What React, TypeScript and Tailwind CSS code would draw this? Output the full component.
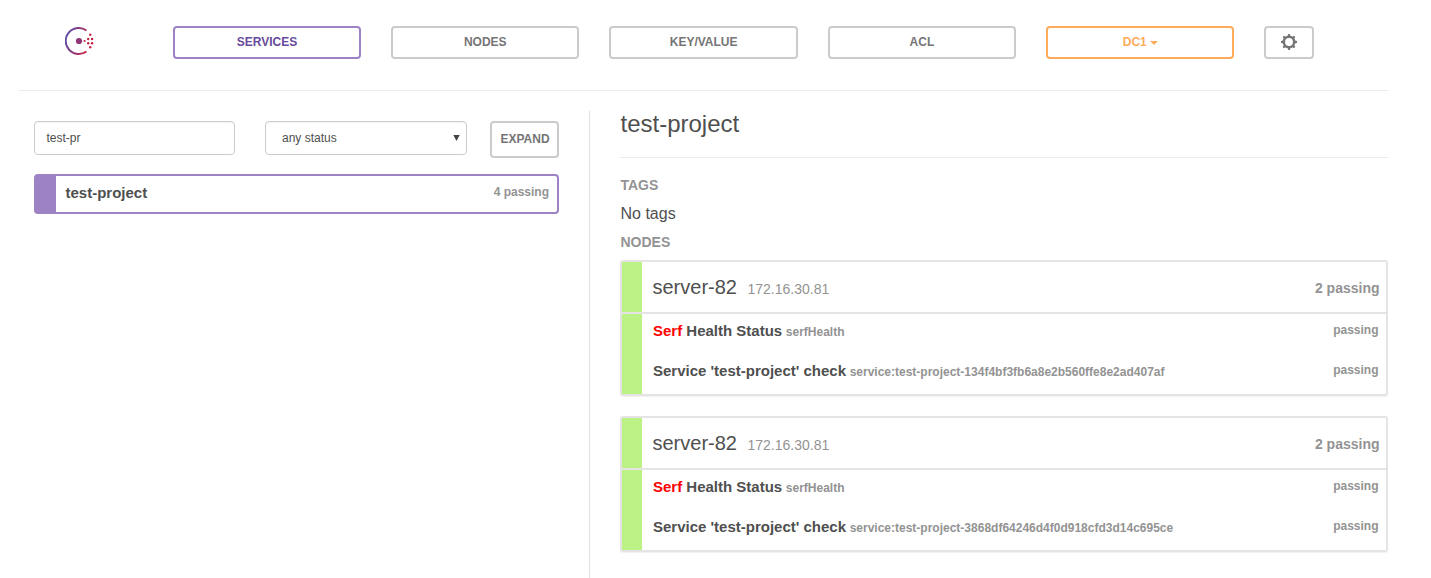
import React from "react";

const navItems = ["SERVICES", "NODES", "KEY/VALUE", "ACL"];

const nodes = [
  { name: "server-82", ip: "172.16.30.81", check: "service:test-project-134f4bf3fb6a8e2b560ffe8e2ad407af" },
  { name: "server-82", ip: "172.16.30.81", check: "service:test-project-3868df64246d4f0d918cfd3d14c695ce" },
];

function Logo() {
  return (
    <svg width="30" height="30" viewBox="0 0 30 30" className="block shrink-0">
      <defs>
        <linearGradient id="ring" x1="0" y1="0.3" x2="1" y2="0.7">
          <stop offset="0" stopColor="#5c4ea5" />
          <stop offset="0.5" stopColor="#8a3a80" />
          <stop offset="1" stopColor="#c62a48" />
        </linearGradient>
      </defs>
      <path d="M21.5 4.6A13 13 0 1 0 21.5 25.4" fill="none" stroke="url(#ring)" strokeWidth="1.9" />
      <circle cx="14" cy="15" r="3.1" fill="#8f3878" />
      <circle cx="19.6" cy="15" r="1.1" fill="#b03060" />
      <g fill="#c8203f">
        <circle cx="23.2" cy="13" r="1.2" />
        <circle cx="23.2" cy="17.2" r="1.2" />
        <circle cx="27.1" cy="13" r="1.2" />
        <circle cx="27.1" cy="17.2" r="1.2" />
        <circle cx="25.2" cy="8.8" r="1.2" />
        <circle cx="25.2" cy="21.3" r="1.2" />
      </g>
    </svg>
  );
}

function Gear() {
  return (
    <svg width="16" height="16" viewBox="0 0 16 16" className="block">
      <circle cx="8" cy="8" r="5.2" fill="none" stroke="#757575" strokeWidth="2.5" />
      <g fill="#757575">
        {[0, 45, 90, 135, 180, 225, 270, 315].map((a) => (
          <path key={a} d="M6.5 2.8L7.1 0H8.9L9.5 2.8Z" transform={`rotate(${a} 8 8)`} />
        ))}
      </g>
    </svg>
  );
}

function CheckRow({ title, id }: { title: React.ReactNode; id: string }) {
  return (
    <div className="flex h-10 justify-between pl-[11px] pr-[7.5px]">
      <div className="pt-[7px] leading-5 whitespace-nowrap">
        <span className="text-[15px] font-bold text-[#4f4f4f]">{title}</span>
        <span className="ml-[3.6px] text-[12px] font-bold text-[#939393]">{id}</span>
      </div>
      <div className="pt-[6px] text-[12px] leading-5 font-bold text-[#939393]">passing</div>
    </div>
  );
}

export default function App() {
  return (
    <div className="h-[578px] w-[1431px] overflow-hidden bg-white font-['Liberation_Sans',Arial,sans-serif] text-[#4f4f4f]">
      <div className="ml-[19px] w-[1369px]">
        <header className="flex h-[91px] items-start border-b border-[#ebebeb] pt-[26px] pl-[46px]">
          <Logo />
          <nav className="ml-[77.8px] flex gap-[30px]">
            {navItems.map((item, i) => (
              <button
                key={item}
                className={
                  "h-[33px] w-[188.33px] rounded-[4px] border-2 text-[12px] leading-[27px] font-bold " +
                  (i === 0 ? "border-[#9d83c5] text-[#694a9c]" : "border-[#cbcbcb] text-[#757575]")
                }
              >
                {item}
              </button>
            ))}
            <button className="flex h-[33px] w-[188.33px] items-center justify-center gap-[3px] rounded-[4px] border-2 border-[#feac5b] pb-[2px] text-[12px] font-bold text-[#feac5b]">
              DC1
              <svg width="8" height="4" viewBox="0 0 8 4" className="mt-[3px]">
                <path d="M0 0H8L4 4Z" fill="currentColor" />
              </svg>
            </button>
            <button className="flex h-[33px] w-[50px] items-center justify-center rounded-[4px] border-2 border-[#cbcbcb] pb-[1px]">
              <Gear />
            </button>
          </nav>
        </header>

        <main className="flex pt-5">
          <section className="w-[570px] shrink-0 pt-[10px] pl-[15px]">
            <div className="flex items-start">
              <div className="h-[34px] w-[201px] rounded-[4px] border border-[#cccccc] pl-[11.5px] text-[12px] leading-[32px] shadow-[inset_0_1px_1px_rgba(0,0,0,0.05)]">
                test-pr
              </div>
              <div className="ml-[30px] flex h-[34px] w-[202px] items-center justify-between rounded-[4px] border border-[#cccccc] pr-[6px] pl-[16px] text-[12px] shadow-[inset_0_1px_1px_rgba(0,0,0,0.05)]">
                any status
                <svg width="7" height="6" viewBox="0 0 7 6">
                  <path d="M0.3 0H6.7L3.5 6Z" fill="#444" />
                </svg>
              </div>
              <button className="ml-[23px] h-[37px] w-[69px] rounded-[4px] border-2 border-[#cbcbcb] pb-[2px] pl-[1px] text-[12px] font-bold text-[#757575]">
                EXPAND
              </button>
            </div>
            <div className="mt-[16px] flex h-[40px] w-[525px] rounded-[4px] border-2 border-[#9d83c5]">
              <div className="w-5 bg-[#9d83c5]" />
              <div className="flex flex-1 justify-between pr-[8px] pl-[9.5px] font-bold">
                <span className="pt-[7px] text-[15px] leading-5">test-project</span>
                <span className="pt-[6px] text-[12px] leading-5 text-[#939393]">4 passing</span>
              </div>
            </div>
          </section>

          <section className="h-[480px] flex-1 border-l border-[#e0e0e0] pl-[30px]">
            <h1 className="h-[47px] border-b border-[#ebebeb] pl-[0.5px] text-[24px] leading-[26px]">test-project</h1>
            <h2 className="mt-[17px] pl-[0.5px] text-[14px] leading-5 font-bold text-[#939393]">TAGS</h2>
            <p className="mt-[9px] pl-[0.5px] text-[16px] leading-5">No tags</p>
            <h2 className="mt-[8px] pl-[0.5px] text-[14px] leading-5 font-bold text-[#939393]">NODES</h2>
            <div className="mt-[8px] flex flex-col gap-5">
              {nodes.map((node) => (
                <article
                  key={node.check}
                  className="h-[136px] rounded-[3px] border-2 border-[#e4e4e4] shadow-[0_1px_1px_rgba(0,0,0,0.06)]"
                >
                  <div className="flex h-[52px] border-b-2 border-[#e4e4e4]">
                    <div className="w-5 bg-[#bcf185]" />
                    <div className="flex flex-1 items-start pr-[6.5px] pl-[10.5px]">
                      <span className="pt-[13px] text-[20px] leading-6">{node.name}</span>
                      <span className="ml-[10.5px] pt-[17px] text-[14px] leading-5 text-[#939393]">{node.ip}</span>
                      <span className="ml-auto pt-[16px] text-[14px] leading-5 font-bold text-[#939393]">2 passing</span>
                    </div>
                  </div>
                  <div className="flex h-20">
                    <div className="w-5 bg-[#bcf185]" />
                    <div className="flex-1">
                      <CheckRow title={<><span className="text-[#ff0000]">Serf</span> Health Status</>} id="serfHealth" />
                      <CheckRow title="Service 'test-project' check" id={node.check} />
                    </div>
                  </div>
                </article>
              ))}
            </div>
          </section>
        </main>
      </div>
    </div>
  );
}
